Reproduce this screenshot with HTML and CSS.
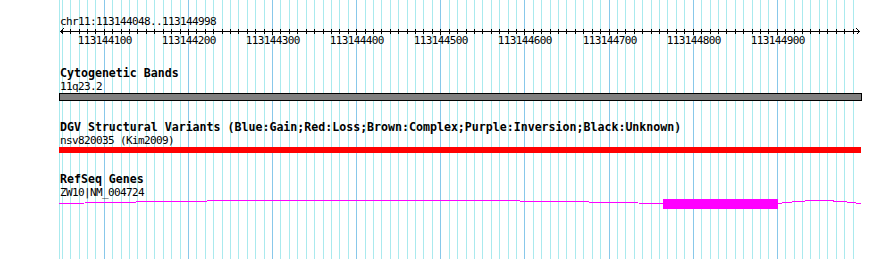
FILE: index.html
```html
<!DOCTYPE html>
<html lang="en">
<head>
  <meta charset="UTF-8">
  <title>chr11:113144048..113144998</title>
  <link rel="stylesheet" href="styles.css">
</head>
<body>
  <div class="browser">
    <svg class="grid" id="grid" width="890" height="259"></svg>

    <div class="panel">
      <div class="ruler">
        <div class="ref-name">chr11:113144048..113144998</div>
        <svg class="axis" id="axis" width="890" height="20">
          <g class="axis-labels">
            <text x="104.8" y="16">113144100</text>
            <text x="188.8" y="16">113144200</text>
            <text x="272.8" y="16">113144300</text>
            <text x="356.8" y="16">113144400</text>
            <text x="440.8" y="16">113144500</text>
            <text x="524.8" y="16">113144600</text>
            <text x="609.8" y="16">113144700</text>
            <text x="693.8" y="16">113144800</text>
            <text x="777.8" y="16">113144900</text>
          </g>
        </svg>
      </div>

      <section class="track">
        <div class="track-title">Cytogenetic Bands</div>
        <div class="feature-label">11q23.2</div>
        <div class="band"></div>
      </section>

      <section class="track">
        <div class="track-title">DGV Structural Variants (Blue:Gain;Red:Loss;Brown:Complex;Purple:Inversion;Black:Unknown)</div>
        <div class="feature-label">nsv820035 (Kim2009)</div>
        <div class="variant loss"></div>
      </section>

      <section class="track">
        <div class="track-title">RefSeq Genes</div>
        <div class="feature-label">ZW10|NM_004724</div>
        <svg class="gene" width="890" height="10">
          <path d="M59 4.5 Q361 -2.5 663 4.5" />
          <rect x="663" y="0" width="115" height="10" />
          <path d="M778 4.5 Q819 -1.5 861 4.5" />
        </svg>
      </section>
    </div>
  </div>

  <script>
    const NS = 'http://www.w3.org/2000/svg';
    const grid = document.getElementById('grid');
    const axis = document.getElementById('axis');

    // bp offset (from 113144000) -> screen x
    function xFor(bp) {
      return Math.floor(104.3 + (bp - 100) * 0.84125) + 0.5;
    }

    function line(parent, x1, y1, x2, y2, cls) {
      const l = document.createElementNS(NS, 'line');
      l.setAttribute('x1', x1);
      l.setAttribute('y1', y1);
      l.setAttribute('x2', x2);
      l.setAttribute('y2', y2);
      l.setAttribute('class', cls);
      parent.appendChild(l);
    }

    // left edge of the panel
    line(grid, 59.5, 0, 59.5, 259, 'minor');

    for (let bp = 50; bp <= 990; bp += 10) {
      const x = xFor(bp);
      const major = bp % 100 === 0;
      line(grid, x, 0, x, 259, major ? 'major' : 'minor');
      line(axis, x, 1, x, major ? 7 : 6, 'tick');
    }

    // axis line with arrow heads
    line(axis, 60, 3.5, 860, 3.5, 'tick');
    const arrows = document.createElementNS(NS, 'path');
    arrows.setAttribute('d', 'M63.5 0.5 L60.5 3.5 L63.5 6.5 M856.5 0.5 L859.5 3.5 L856.5 6.5');
    arrows.setAttribute('class', 'arrow');
    axis.appendChild(arrows);
  </script>
</body>
</html>
```

FILE: styles.css
```css
* {
  margin: 0;
  padding: 0;
  box-sizing: border-box;
}

body {
  background: #ffffff;
  font-family: 'DejaVu Sans Mono', 'Liberation Mono', monospace;
  color: #000000;
}

.browser {
  position: relative;
  width: 890px;
  height: 259px;
  overflow: hidden;
}

.grid {
  position: absolute;
  top: 0;
  left: 0;
}

.grid line {
  stroke-width: 1;
  shape-rendering: crispEdges;
}

.grid .minor {
  stroke: #aaeaee;
}

.grid .major {
  stroke: #88c8ea;
}

.panel {
  position: relative;
  display: flex;
  flex-direction: column;
}

.ruler {
  padding-top: 15px;
  display: flex;
  flex-direction: column;
}

.ref-name {
  padding-left: 60px;
  font-size: 11px;
  letter-spacing: -0.62px;
  line-height: 13px;
  height: 13px;
}

.axis {
  display: block;
}

.axis .tick {
  stroke: #000000;
  stroke-width: 1;
  shape-rendering: crispEdges;
}

.axis .arrow {
  fill: none;
  stroke: #000000;
  stroke-width: 1;
  shape-rendering: crispEdges;
}

.axis-labels text {
  font-family: 'DejaVu Sans Mono', 'Liberation Mono', monospace;
  font-size: 11px;
  letter-spacing: -0.62px;
  text-anchor: middle;
  fill: #000000;
}

.track {
  margin-top: 19px;
  display: flex;
  flex-direction: column;
}

.track + .track {
  margin-top: 20px;
}

.track-title {
  padding-left: 60px;
  font-size: 11.6px;
  font-weight: bold;
  line-height: 13px;
  height: 13px;
  white-space: nowrap;
}

.feature-label {
  padding-left: 60px;
  font-size: 11px;
  letter-spacing: -0.62px;
  line-height: 13px;
  height: 13px;
  white-space: nowrap;
}

.band {
  margin-left: 59px;
  width: 803px;
  height: 8px;
  background: #808080;
  border: 1px solid #000000;
}

.variant {
  margin-left: 59px;
  width: 802px;
  height: 6px;
}

.variant.loss {
  background: #ff0000;
}

.gene {
  display: block;
}

.gene path {
  fill: none;
  stroke: #ff00ff;
  stroke-width: 1;
  shape-rendering: crispEdges;
}

.gene rect {
  fill: #ff00ff;
  shape-rendering: crispEdges;
}
```
